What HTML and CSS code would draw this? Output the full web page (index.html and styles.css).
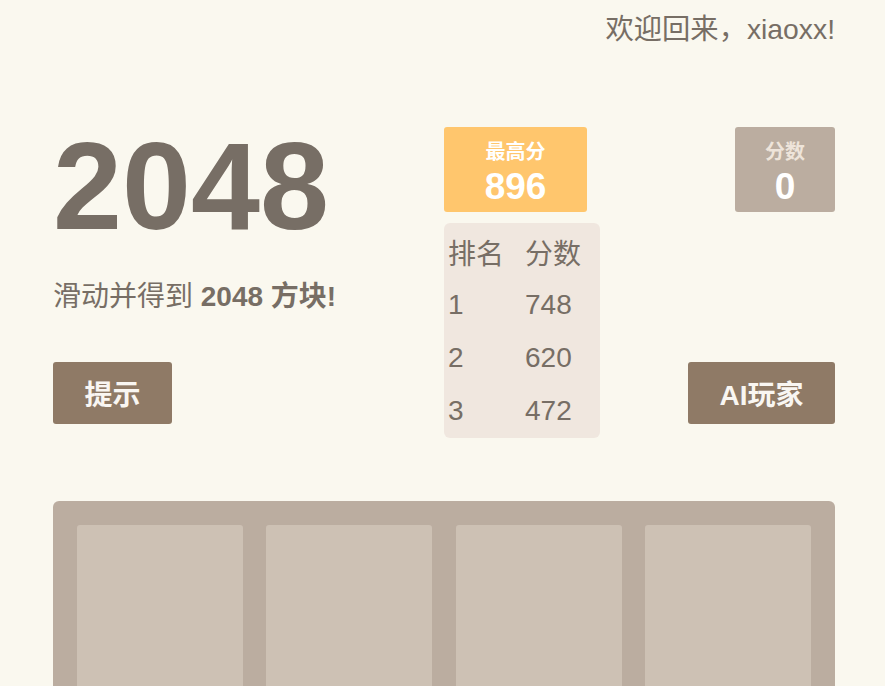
FILE: index.html
```html
<!DOCTYPE html>
<html lang="zh">
<head>
<meta charset="utf-8">
<title>2048</title>
<link rel="stylesheet" href="styles.css">
</head>
<body>
<div class="page">
  <div class="welcome">欢迎回来，xiaoxx!</div>
  <div class="header">
    <div class="col-left">
      <h1 class="title">2048</h1>
      <p class="intro">滑动并得到 <strong>2048 方块!</strong></p>
      <button class="btn">提示</button>
    </div>
    <div class="col-right">
      <div class="col-mid">
        <div class="score-box best">
          <div class="score-label">最高分</div>
          <div class="score-value">896</div>
        </div>
        <div class="board">
          <div class="board-row"><span>排名</span><span>分数</span></div>
          <div class="board-row"><span>1</span><span>748</span></div>
          <div class="board-row"><span>2</span><span>620</span></div>
          <div class="board-row"><span>3</span><span>472</span></div>
        </div>
      </div>
      <div class="col-end">
        <div class="score-box current">
          <div class="score-label">分数</div>
          <div class="score-value">0</div>
        </div>
        <button class="btn btn-ai">AI玩家</button>
      </div>
    </div>
  </div>
  <div class="grid">
    <div class="cell"></div><div class="cell"></div><div class="cell"></div><div class="cell"></div>
    <div class="cell"></div><div class="cell"></div><div class="cell"></div><div class="cell"></div>
    <div class="cell"></div><div class="cell"></div><div class="cell"></div><div class="cell"></div>
    <div class="cell"></div><div class="cell"></div><div class="cell"></div><div class="cell"></div>
  </div>
</div>
</body>
</html>
```
FILE: styles.css
```css
* { box-sizing: border-box; }
html, body { margin: 0; padding: 0; }
body {
  background: #faf8ef;
  color: #776e65;
  font-family: "Liberation Sans", "Noto Sans CJK SC", sans-serif;
}
.page {
  width: 782px;
  margin-left: 53px;
  padding-top: 13px;
}
.welcome {
  text-align: right;
  font-size: 28.3px;
  line-height: 32px;
}
.header {
  display: grid;
  grid-template-columns: 391px 391px;
  margin-top: 77px;
}
.col-left { display: flex; flex-direction: column; align-items: flex-start; }
.title {
  margin: 0;
  font-size: 124px;
  line-height: 128px;
  font-weight: bold;
}
.intro {
  margin: 31px 0 0;
  font-size: 28px;
  line-height: 32px;
}
.intro strong { font-weight: bold; }
.btn {
  margin-top: 49px;
  height: 62px;
  padding: 0 31.5px;
  border: 0;
  border-radius: 3px;
  background: #8f7a66;
  color: #f9f6f2;
  font-family: "Liberation Sans", "Noto Sans CJK SC", sans-serif;
  font-size: 28px;
  font-weight: bold;
}
.col-right { display: flex; justify-content: space-between; align-items: flex-start; }
.col-mid { margin-top: 5px; display: flex; flex-direction: column; align-items: flex-start; }
.col-end { margin-top: 5px; display: flex; flex-direction: column; align-items: flex-end; }
.score-box {
  height: 85px;
  border-radius: 3px;
  padding-top: 13px;
  text-align: center;
  color: #fff;
  font-weight: bold;
}
.score-box.best { width: 143px; background: #ffc66d; }
.score-box.current { width: 100px; background: #bbada0; }
.score-label { font-size: 20px; line-height: 24px; }
.current .score-label { color: #eee4da; }
.score-value { font-size: 37px; line-height: 45px; }
.btn-ai { margin-top: 150px; }
.board {
  margin-top: 11px;
  width: 156px;
  height: 215px;
  padding: 2px 4px 0;
  background: #f0e7df;
  border-radius: 6px;
  font-size: 28px;
}
.board-row {
  display: grid;
  grid-template-columns: 77px auto;
  height: 53px;
  align-items: center;
}
.grid {
  margin-top: 63px;
  background: #bbada0;
  border-radius: 6px;
  padding: 24px;
  display: grid;
  grid-template-columns: repeat(4, 1fr);
  grid-auto-rows: 166px;
  gap: 23.33px;
}
.cell {
  background: #cdc1b4;
  border-radius: 3px;
}
```
